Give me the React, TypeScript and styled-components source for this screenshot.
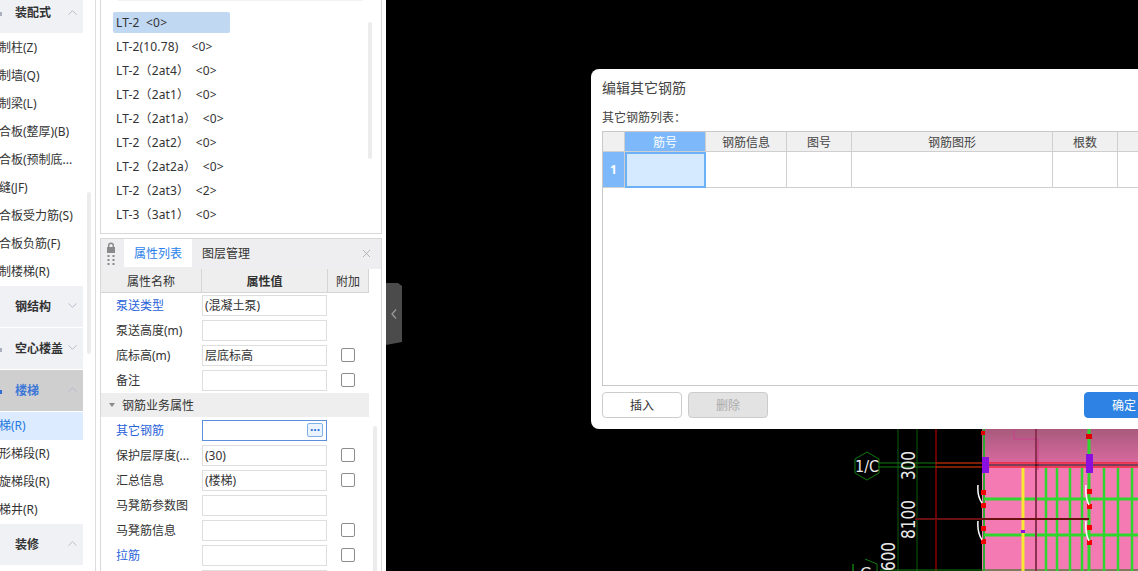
import React from "react";
import styled, { createGlobalStyle } from "styled-components";
import { ChevronDown, ChevronUp, X } from "lucide-react";

const GlobalStyle = createGlobalStyle`
  html, body {
    margin: 0;
    padding: 0;
    background: #000;
    overflow: hidden;
  }
  * {
    box-sizing: border-box;
  }
`;

const Page = styled.div`
  position: relative;
  display: flex;
  width: 1138px;
  height: 571px;
  overflow: hidden;
  font-family: "Noto Sans", "Noto Sans CJK SC", sans-serif;
  font-size: 12px;
  color: #333;
`;

/* left nav */
const Nav = styled.div`
  display: flex;
  width: 96px;
  flex: none;
  background: #fff;
  border-right: 1px solid #dcdcdc;
`;

const NavList = styled.div`
  width: 83px;
  flex: none;
`;

const NavHeader = styled.div<{ $active?: boolean; $first?: boolean }>`
  display: flex;
  align-items: center;
  height: ${(p) => (p.$first ? "33px" : "41px")};
  margin-bottom: 1px;
  padding-left: 15px;
  padding-bottom: ${(p) => (p.$first ? "9px" : "2px")};
  background: ${(p) => (p.$active ? "#cfcfcf" : "#f0f1f5")};
  color: ${(p) => (p.$active ? "#3d78d8" : "#333")};
  font-weight: 700;
  white-space: nowrap;

  svg {
    position: absolute;
    left: 65px;
    color: #b4b9c9;
  }
`;

// sliver of the group icon, the rest is scrolled out of view
const NavMark = styled.span<{ $color: string }>`
  position: absolute;
  left: 0;
  width: 2px;
  height: 4px;
  margin-top: 4px;
  background: ${(p) => p.$color};
`;

const NavItem = styled.div<{ $selected?: boolean }>`
  height: 28px;
  line-height: 28px;
  margin-left: -1px;
  background: ${(p) => (p.$selected ? "#dcebff" : "transparent")};
  color: ${(p) => (p.$selected ? "#1f7ae0" : "#333")};
  white-space: nowrap;
  overflow: hidden;
`;

const NavTrack = styled.div`
  width: 4px;
  height: 162px;
  margin: 192px 0 0 4px;
  background: #ececec;
  border-radius: 2px;
`;

/* middle column */
const Middle = styled.div`
  display: flex;
  flex-direction: column;
  gap: 4px;
  width: 290px;
  flex: none;
  padding: 0 4px;
  background: #fff;
`;

const ListPanel = styled.div`
  display: flex;
  height: 234px;
  flex: none;
  padding: 12px 9px 0 12px;
  border: 1px solid #d8d8d8;
  border-top: 0;
  background: linear-gradient(#f2f2f2, #f2f2f2) no-repeat 17px 0 / 245px 1px;
`;

const FloorList = styled.div`
  flex: 1;
`;

const FloorItem = styled.div<{ $selected?: boolean }>`
  width: 117px;
  height: 21px;
  margin-bottom: 3px;
  padding-left: 3px;
  line-height: 21px;
  border-radius: 2px;
  background: ${(p) => (p.$selected ? "#c0d8f2" : "transparent")};
  letter-spacing: 0.15px;
  white-space: pre;
`;

const ListTrack = styled.div`
  width: 4px;
  height: 137px;
  margin-top: 10px;
  background: #ececec;
  border-radius: 2px;
`;

const PropPanel = styled.div`
  flex: 1;
  border: 1px solid #d8d8d8;
  border-bottom: 0;
`;

const TabBar = styled.div`
  display: flex;
  align-items: stretch;
  height: 30px;
  background: #eeeef0;
`;

const Grip = styled.div`
  display: flex;
  flex-direction: column;
  width: 23px;
  padding: 3px 0 0 5px;
  color: #8a8a8a;
`;

const Tab = styled.div<{ $active?: boolean }>`
  display: flex;
  align-items: center;
  width: 68px;
  height: 28px;
  margin-right: ${(p) => (p.$active ? "10px" : "0")};
  background: ${(p) => (p.$active ? "#fff" : "transparent")};
  color: ${(p) => (p.$active ? "#2a80ea" : "#333")};
  justify-content: ${(p) => (p.$active ? "center" : "flex-start")};
`;

const CloseButton = styled.div`
  display: flex;
  align-items: center;
  margin-left: auto;
  padding: 0 8px 2px 0;
  color: #a8a8a8;
`;

const PropBody = styled.div`
  display: flex;
`;

const PropTable = styled.div`
  width: 268px;
  flex: none;
`;

const PropTrack = styled.div`
  width: 4px;
  height: 146px;
  margin: 157px 0 0 4px;
  background: #ececec;
  border-radius: 2px;
`;

const HeadRow = styled.div`
  display: grid;
  grid-template-columns: 101px 126px 41px;
  height: 24px;
  background: #eeeeee;
  border-bottom: 1px solid #d5d5d5;
`;

const HeadCell = styled.div<{ $bold?: boolean }>`
  display: flex;
  align-items: center;
  justify-content: center;
  border-right: 1px solid #d5d5d5;
  font-weight: ${(p) => (p.$bold ? 700 : 400)};
`;

const PropRow = styled.div`
  display: grid;
  grid-template-columns: 101px 125px 42px;
  align-items: center;
  height: 25px;
`;

const PropName = styled.div<{ $link?: boolean }>`
  padding: 0 0 2px 15px;
  color: ${(p) => (p.$link ? "#2a63d8" : "#333")};
  white-space: nowrap;
`;

const PropValue = styled.div<{ $focused?: boolean }>`
  display: flex;
  align-items: center;
  justify-content: space-between;
  height: 21px;
  padding: 0 3px 1px 2px;
  border: 1px solid ${(p) => (p.$focused ? "#5b8fd9" : "#dedede")};
  white-space: nowrap;
`;

const MoreButton = styled.div`
  display: flex;
  align-items: center;
  justify-content: center;
  width: 16px;
  height: 14px;
  border: 1px solid #7fb0ea;
  border-radius: 2px;
  background: #eaf3fe;
  color: #2a70d0;
  font-size: 12px;
  font-weight: 700;
  line-height: 10px;
`;

const CheckBox = styled.div`
  justify-self: center;
  width: 14px;
  height: 14px;
  margin-top: -1px;
  border: 1px solid #8c8c8c;
  border-radius: 2px;
  background: #fff;
`;

const GroupRow = styled.div`
  display: flex;
  align-items: center;
  height: 24px;
  margin-bottom: 1px;
  padding-left: 8px;
  background: #eeeeee;

  &::before {
    content: "";
    margin-right: 7px;
    border-left: 3px solid transparent;
    border-right: 3px solid transparent;
    border-top: 4px solid #8a8a8a;
  }
`;

/* canvas */
const Canvas = styled.div`
  flex: 1;
  background: #000;
`;

const CadDrawing = styled.svg`
  display: block;
  width: 752px;
  height: 571px;
`;

const Handle = styled.div`
  position: absolute;
  left: 386px;
  top: 283px;
  display: flex;
  align-items: center;
  justify-content: center;
  width: 16px;
  height: 62px;
  background: #4b4b4b;
  color: #9a9a9a;
  clip-path: polygon(0 0, 75% 0, 100% 5%, 100% 95%, 0 100%);
`;

/* dialog */
const Dialog = styled.div`
  position: absolute;
  left: 591px;
  top: 69px;
  display: flex;
  flex-direction: column;
  width: 600px;
  height: 360px;
  padding: 0 11px 11px;
  background: #fff;
  border-radius: 8px;
`;

const DialogTitle = styled.div`
  height: 38px;
  line-height: 38px;
  font-size: 14px;
  color: #444;
`;

const DialogLabel = styled.div`
  height: 24px;
  line-height: 22px;
  color: #444;
`;

const RebarTable = styled.div`
  height: 255px;
  flex: none;
  border: 1px solid #c8c8c8;
`;

const RebarGrid = styled.div`
  display: grid;
  grid-template-columns: 22px 81px 81px 65px 201px 65px 1fr;
  grid-template-rows: 20px 36px;
`;

const RebarCell = styled.div<{ $kind?: "head" | "blue" | "picked" }>`
  display: flex;
  align-items: center;
  justify-content: center;
  border-right: 1px solid #cfcfcf;
  border-bottom: 1px solid #cfcfcf;
  background: ${(p) =>
    p.$kind === "head"
      ? "#f0f0f0"
      : p.$kind === "blue"
        ? "#7db9fa"
        : p.$kind === "picked"
          ? "#d5e9ff"
          : "#fff"};
  color: ${(p) => (p.$kind === "blue" ? "#fff" : "#444")};
  ${(p) => (p.$kind === "picked" ? "border: 2px solid #6cb0f5;" : "")}
`;

const RowNumber = styled(RebarCell)`
  font-weight: 700;
`;

const DialogFooter = styled.div`
  display: flex;
  gap: 6px;
  margin-top: 6px;
`;

const FooterButton = styled.div<{ $kind?: "disabled" | "primary" }>`
  display: flex;
  align-items: center;
  justify-content: center;
  width: 80px;
  height: 26px;
  border-radius: 4px;
  border: 1px solid ${(p) => (p.$kind === "primary" ? "#2e82e4" : "#cccccc")};
  background: ${(p) =>
    p.$kind === "primary"
      ? "#2e82e4"
      : p.$kind === "disabled"
        ? "#e3e3e3"
        : "#fff"};
  color: ${(p) =>
    p.$kind === "primary"
      ? "#fff"
      : p.$kind === "disabled"
        ? "#aaa"
        : "#333"};
  margin-left: ${(p) => (p.$kind === "primary" ? "auto" : "0")};
  margin-right: ${(p) => (p.$kind === "primary" ? "16px" : "0")};
`;

const navTop = ["制柱(Z)", "制墙(Q)", "制梁(L)", "合板(整厚)(B)", "合板(预制底...", "缝(JF)", "合板受力筋(S)", "合板负筋(F)", "制楼梯(R)"];
const navStair = ["梯(R)", "形梯段(R)", "旋梯段(R)", "梯井(R)"];

const floors = [
  "LT-2  <0>",
  "LT-2(10.78)    <0>",
  "LT-2（2at4）  <0>",
  "LT-2（2at1）  <0>",
  "LT-2（2at1a）  <0>",
  "LT-2（2at2）  <0>",
  "LT-2（2at2a）  <0>",
  "LT-2（2at3）  <2>",
  "LT-3（3at1）  <0>",
];

type Prop = { name: string; value?: string; link?: boolean; check?: boolean };

const propsA: Prop[] = [
  { name: "泵送类型", value: "(混凝土泵)", link: true },
  { name: "泵送高度(m)" },
  { name: "底标高(m)", value: "层底标高", check: true },
  { name: "备注", check: true },
];

const propsB: Prop[] = [
  { name: "保护层厚度(...", value: "(30)", check: true },
  { name: "汇总信息", value: "(楼梯)", check: true },
  { name: "马凳筋参数图" },
  { name: "马凳筋信息", check: true },
  { name: "拉筋", link: true, check: true },
  { name: "" },
];

const renderProp = (p: Prop) => (
  <PropRow key={p.name}>
    <PropName $link={p.link}>{p.name}</PropName>
    <PropValue>{p.value}</PropValue>
    {p.check ? <CheckBox /> : <span />}
  </PropRow>
);

const rungs = [1046, 1057, 1070, 1082, 1104, 1118, 1132];
const redDots = [
  [981, 490], [981, 503], [981, 526], [981, 539],
  [1087, 489], [1087, 504], [1087, 525], [1087, 540],
];

const Cad = () => (
  <CadDrawing viewBox="386 0 752 571">
    <defs>
      <linearGradient id="slab" x1="0" y1="0" x2="0" y2="1">
        <stop offset="0" stopColor="#a85a7c" />
        <stop offset="1" stopColor="#d9699f" />
      </linearGradient>
    </defs>
    <rect x="982" y="429" width="156" height="34" fill="url(#slab)" />
    <rect x="982" y="463" width="156" height="108" fill="#f47ab4" />
    <path d="M1014 429V439H1038V470" fill="none" stroke="#c8408a" />
    <path d="M898 429V571M917 429V571" stroke="#0b5c0b" />
    <path d="M936 429V571" stroke="#d00000" />
    <path d="M878 463H982M878 467H982M880 570H1138" stroke="#0f7a0f" />
    <path d="M984 429V571" stroke="#2ea82e" strokeWidth="2" />
    <path d="M1089 429V571" stroke="#2ed62e" strokeWidth="3" />
    {rungs.map((x) => (
      <path key={x} d={`M${x} 468V571`} stroke="#2ed62e" strokeWidth="2.5" />
    ))}
    <path d="M984 499H1138M984 535H1138" stroke="#2ed62e" strokeWidth="3" />
    <path d="M1023 468V530M1023 533V571" stroke="#f7e830" strokeWidth="3" />
    <path d="M1036 429V571" stroke="#8b3050" strokeWidth="2" />
    <path d="M915 519H1089" stroke="#6b1010" strokeWidth="2" />
    <path d="M936 463H1138M936 467H1138" stroke="#f00000" />
    <path d="M982 465H1138" stroke="#000" />
    <rect x="982" y="457" width="7" height="16" fill="#8a10e0" />
    <rect x="1086" y="454" width="7" height="19" fill="#8a10e0" />
    <rect x="1021" y="530" width="4" height="3" fill="#8a10e0" />
    <rect x="981" y="431" width="4" height="4" fill="#e00000" />
    <rect x="1086" y="434" width="6" height="5" fill="#e00000" />
    {redDots.map(([x, y]) => (
      <rect key={`${x}-${y}`} x={x} y={y} width="5" height="5" fill="#f00000" />
    ))}
    <path
      d="M978 485Q977 496 982 503M978 521Q977 532 982 540M1086 485Q1085 497 1089 505M1086 521Q1085 533 1089 541"
      fill="none"
      stroke="#fff"
      strokeWidth="1.5"
    />
    <path d="M867 452L879 459V473L867 480L855 473V459Z" fill="none" stroke="#0f7a0f" />
    <path d="M865 559L877 564V571M853 571V564Z" fill="none" stroke="#0f7a0f" />
    <g fill="#e8e8e8" fontFamily="'DejaVu Sans', sans-serif" fontSize="19">
      <text x="855" y="472" fontSize="16" textLength="24" lengthAdjust="spacingAndGlyphs">1/C</text>
      <text x="860" y="579" fontSize="16">C</text>
      <text transform="translate(915 480) rotate(-90)" textLength="29" lengthAdjust="spacingAndGlyphs">300</text>
      <text transform="translate(915 539) rotate(-90)" textLength="39" lengthAdjust="spacingAndGlyphs">8100</text>
      <text transform="translate(895 571) rotate(-90)" textLength="29" lengthAdjust="spacingAndGlyphs">600</text>
    </g>
  </CadDrawing>
);

export default function App() {
  return (
    <Page>
      <GlobalStyle />
      <Nav>
        <NavList>
          <NavHeader $first>
            <NavMark $color="#a9aebb" />
            装配式
            <ChevronUp size={15} strokeWidth={1.5} />
          </NavHeader>
          {navTop.map((t) => (
            <NavItem key={t}>{t}</NavItem>
          ))}
          <NavHeader>
            钢结构
            <ChevronDown size={15} strokeWidth={1.5} />
          </NavHeader>
          <NavHeader>
            <NavMark $color="#a9aebb" />
            空心楼盖
            <ChevronDown size={15} strokeWidth={1.5} />
          </NavHeader>
          <NavHeader $active>
            <NavMark $color="#2f6fd8" />
            楼梯
            <ChevronUp size={15} strokeWidth={1.5} />
          </NavHeader>
          {navStair.map((t, i) => (
            <NavItem key={t} $selected={i === 0}>
              {t}
            </NavItem>
          ))}
          <NavHeader>
            装修
            <ChevronUp size={15} strokeWidth={1.5} />
          </NavHeader>
        </NavList>
        <NavTrack />
      </Nav>

      <Middle>
        <ListPanel>
          <FloorList>
            {floors.map((f, i) => (
              <FloorItem key={f} $selected={i === 0}>
                {f}
              </FloorItem>
            ))}
          </FloorList>
          <ListTrack />
        </ListPanel>

        <PropPanel>
          <TabBar>
            <Grip>
              <svg width="10" height="23" viewBox="0 0 10 23" fill="currentColor">
                <path d="M2 5V3.5a3 3 0 0 1 6 0V5H9v6H1V5Zm1.4 0h3.2V3.5a1.6 1.6 0 0 0-3.2 0Z" />
                <rect x="1.5" y="13" width="2" height="2" />
                <rect x="6.5" y="13" width="2" height="2" />
                <rect x="1.5" y="17" width="2" height="2" />
                <rect x="6.5" y="17" width="2" height="2" />
                <rect x="1.5" y="21" width="2" height="2" />
                <rect x="6.5" y="21" width="2" height="2" />
              </svg>
            </Grip>
            <Tab $active>属性列表</Tab>
            <Tab>图层管理</Tab>
            <CloseButton>
              <X size={13} strokeWidth={1.5} />
            </CloseButton>
          </TabBar>
          <PropBody>
            <PropTable>
              <HeadRow>
                <HeadCell>属性名称</HeadCell>
                <HeadCell $bold>属性值</HeadCell>
                <HeadCell>附加</HeadCell>
              </HeadRow>
              {propsA.map(renderProp)}
              <GroupRow>钢筋业务属性</GroupRow>
              <PropRow>
                <PropName $link>其它钢筋</PropName>
                <PropValue $focused>
                  <span />
                  <MoreButton>···</MoreButton>
                </PropValue>
                <span />
              </PropRow>
              {propsB.map(renderProp)}
            </PropTable>
            <PropTrack />
          </PropBody>
        </PropPanel>
      </Middle>

      <Canvas>
        <Cad />
      </Canvas>

      <Handle>
        <svg width="8" height="12" viewBox="0 0 8 12" fill="none" stroke="currentColor" strokeWidth="1.3">
          <path d="M6 1.5L2 6l4 4.5" />
        </svg>
      </Handle>

      <Dialog>
        <DialogTitle>编辑其它钢筋</DialogTitle>
        <DialogLabel>其它钢筋列表：</DialogLabel>
        <RebarTable>
          <RebarGrid>
            <RebarCell $kind="head" />
            <RebarCell $kind="blue">筋号</RebarCell>
            <RebarCell $kind="head">钢筋信息</RebarCell>
            <RebarCell $kind="head">图号</RebarCell>
            <RebarCell $kind="head">钢筋图形</RebarCell>
            <RebarCell $kind="head">根数</RebarCell>
            <RebarCell $kind="head" />
            <RowNumber $kind="blue">1</RowNumber>
            <RebarCell $kind="picked" />
            <RebarCell />
            <RebarCell />
            <RebarCell />
            <RebarCell />
            <RebarCell />
          </RebarGrid>
        </RebarTable>
        <DialogFooter>
          <FooterButton>插入</FooterButton>
          <FooterButton $kind="disabled">删除</FooterButton>
          <FooterButton $kind="primary">确定</FooterButton>
        </DialogFooter>
      </Dialog>
    </Page>
  );
}
